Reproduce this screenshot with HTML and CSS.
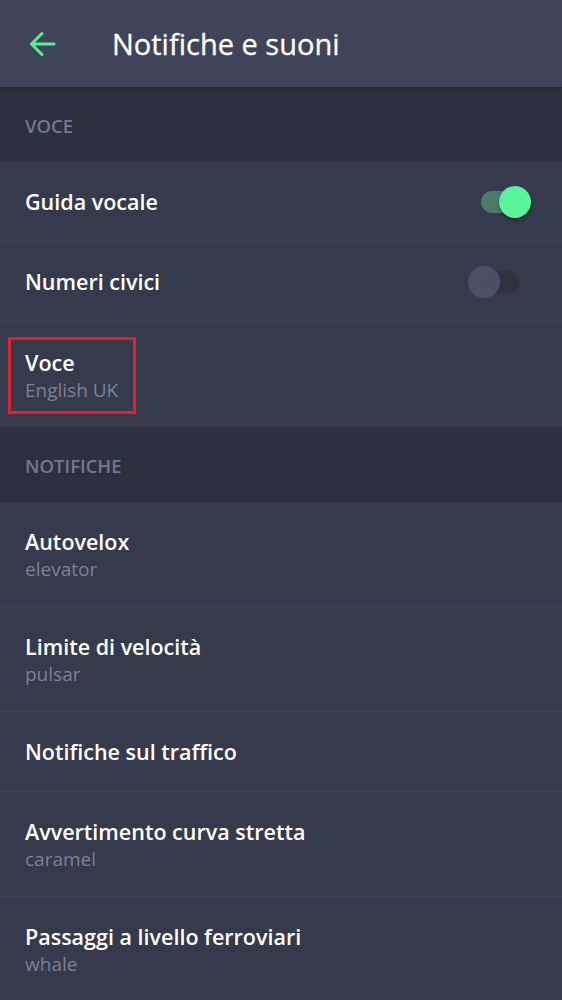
FILE: index.html
```html
<!DOCTYPE html>
<html lang="it">
<head>
<meta charset="utf-8">
<title>Notifiche e suoni</title>
<link rel="stylesheet" href="styles.css">
</head>
<body>
<div class="app">
  <header class="topbar">
    <span class="back">
      <svg width="30" height="30" viewBox="0 0 30 30"><path d="M27 15H5M15 4.5L4.5 15 15 25.5" fill="none" stroke="#58ef98" stroke-width="3" stroke-linecap="round" stroke-linejoin="round"/></svg>
    </span>
    <h1 class="title">Notifiche e suoni</h1>
  </header>

  <div class="section">VOCE</div>
  <div class="row single">
    <span class="label">Guida vocale</span>
    <span class="toggle on"><span class="knob"></span></span>
  </div>
  <div class="row single">
    <span class="label">Numeri civici</span>
    <span class="toggle off"><span class="knob"></span></span>
  </div>
  <div class="row double last">
    <div class="highlight">
      <div class="label">Voce</div>
      <div class="sub">English UK</div>
    </div>
  </div>

  <div class="section">NOTIFICHE</div>
  <div class="row double">
    <div><div class="label">Autovelox</div><div class="sub">elevator</div></div>
  </div>
  <div class="row double">
    <div><div class="label">Limite di velocità</div><div class="sub">pulsar</div></div>
  </div>
  <div class="row single">
    <span class="label">Notifiche sul traffico</span>
  </div>
  <div class="row double">
    <div><div class="label">Avvertimento curva stretta</div><div class="sub">caramel</div></div>
  </div>
  <div class="row double">
    <div><div class="label">Passaggi a livello ferroviari</div><div class="sub">whale</div></div>
  </div>
</div>
</body>
</html>
```

FILE: styles.css
```css
html, body {
  margin: 0;
  padding: 0;
  background: #353a4c;
}
body {
  font-family: "Open Sans", "Noto Sans", sans-serif;
  color: #ffffff;
}
.app {
  width: 562px;
  height: 1000px;
  overflow: hidden;
  background: #353a4c;
}
.topbar {
  height: 87px;
  background: #3f4458;
  display: flex;
  align-items: center;
  box-shadow: 0 1px 2px rgba(0,0,0,0.35);
  position: relative;
  z-index: 1;
}
.back {
  width: 30px;
  height: 30px;
  margin-left: 27px;
  display: flex;
}
.title {
  margin: 0 0 0 55px;
  font-size: 29px;
  font-weight: 400;
  line-height: 36px;
  color: #ffffff;
  -webkit-text-stroke: 0.3px #ffffff;
}
.section {
  height: 75px;
  background: #2d303e;
  color: #717990;
  font-size: 18.5px;
  font-weight: 600;
  padding-left: 25px;
  display: flex;
  align-items: center;
  box-sizing: border-box;
  padding-top: 1px;
}
.row {
  background: #353a4c;
  padding: 0 25px;
  display: flex;
  align-items: center;
  justify-content: space-between;
  box-sizing: border-box;
  border-bottom: 1px solid #3f4458;
}
.row.last {
  border-bottom: none;
}
.row.single {
  height: 80px;
}
.row.double {
  height: 105px;
  padding-top: 1px;
}
.label {
  font-size: 21.5px;
  font-weight: 600;
  line-height: 28px;
  color: #ffffff;
}
.sub {
  font-size: 19px;
  line-height: 26px;
  color: #7b8296;
}
.highlight {
  margin-left: -17px;
  padding: 9px 15px 8px 14px;
  border: 3px solid #e3202b;
}
.toggle {
  position: relative;
  width: 38px;
  height: 22px;
  border-radius: 11px;
  margin-right: 18px;
}
.toggle.on {
  background: #487b68;
}
.toggle.off {
  background: #2e3241;
}
.knob {
  position: absolute;
  top: -5px;
  width: 32px;
  height: 32px;
  border-radius: 50%;
}
.toggle.on .knob {
  right: -12px;
  background: #5af29a;
  box-shadow: 0 2px 3px rgba(0,0,0,0.35);
}
.toggle.off .knob {
  left: -13px;
  background: rgba(84,90,112,0.75);
}
```
